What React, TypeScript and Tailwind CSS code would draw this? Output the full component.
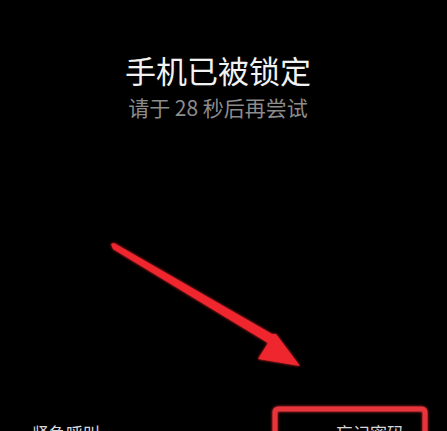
export default function App() {
  return (
    <div
      className="relative w-[447px] h-[431px] overflow-hidden bg-black flex flex-col"
      style={{ fontFamily: '"Noto Sans CJK SC", "Noto Sans", sans-serif' }}
    >
      <div className="flex flex-col items-center pt-[51px] pr-[11px]">
        <div className="text-[31px] leading-[38px] text-[#f2f2f2]">手机已被锁定</div>
        <div className="mt-[5px] text-[21px] leading-[26px] text-[#8c8c8c]">请于 28 秒后再尝试</div>
      </div>
      <div className="mt-auto flex justify-between px-[32px] pr-[43px] translate-y-[14px] text-[17px] leading-[24px] text-[#d8d8d8]">
        <span>紧急呼叫</span>
        <span>忘记密码</span>
      </div>

      {/* annotation arrow */}
      <svg className="absolute left-0 top-0" width="447" height="431" viewBox="0 0 447 431">
        <defs>
          <filter id="glow" x="-20%" y="-20%" width="140%" height="140%">
            <feGaussianBlur stdDeviation="1.5" result="b" />
            <feMerge>
              <feMergeNode in="b" />
              <feMergeNode in="SourceGraphic" />
            </feMerge>
          </filter>
        </defs>
        <polygon
          points="111,244 113,249 268,343 258,359 300,366 276,334 272,334 114,243"
          fill="#f0272e"
          filter="url(#glow)"
        />
        <rect
          x="275"
          y="409"
          width="150"
          height="60"
          rx="3"
          fill="none"
          stroke="#e8343a"
          strokeWidth="5"
          filter="url(#glow)"
        />
      </svg>
    </div>
  );
}
